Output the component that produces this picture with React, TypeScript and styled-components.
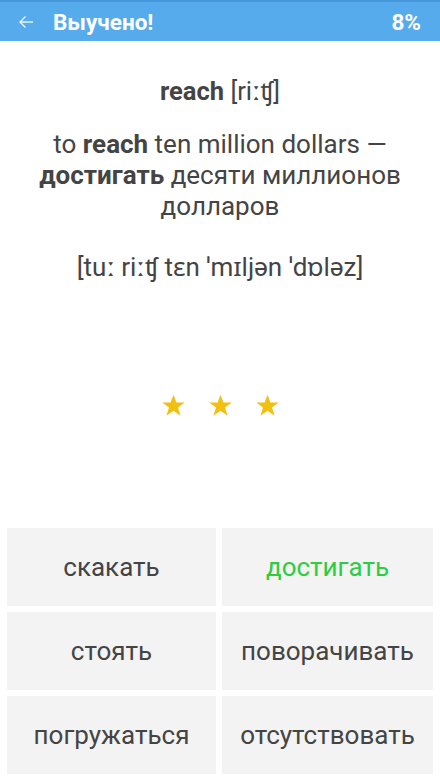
import React from 'react';
import styled, { createGlobalStyle } from 'styled-components';

const GlobalStyle = createGlobalStyle`
	html, body {
		margin: 0;
		padding: 0;
		background: #ffffff;
	}
	body {
		font-family: Roboto, "Noto Sans", "DejaVu Sans", sans-serif;
		-webkit-font-smoothing: antialiased;
	}
`;

const Screen = styled.div`
	display: flex;
	flex-direction: column;
	width: 440px;
	height: 782px;
	background: #ffffff;
	overflow: hidden;
`;

const Toolbar = styled.header`
	display: flex;
	align-items: center;
	height: 39px;
	border-top: 2px solid #4596da;
	background: #56abed;
	color: #ffffff;
	padding: 0 19px 0 18px;
`;

const BackButton = styled.button`
	display: flex;
	align-items: center;
	padding: 0;
	margin: 0 19px 0 0;
	border: none;
	background: none;
	color: rgba(255, 255, 255, 0.85);
	cursor: pointer;
`;

const Title = styled.h1`
	flex: 1;
	margin: 0;
	font-size: 22.5px;
	font-weight: 700;
`;

const Progress = styled.span`
	font-size: 22.5px;
	font-weight: 700;
`;

const Card = styled.section`
	display: flex;
	flex-direction: column;
	align-items: center;
	flex: 1;
	padding: 0 24px;
	color: #444444;
	text-align: center;
`;

const Word = styled.div`
	margin-top: 35px;
	font-size: 25.5px;
	line-height: 30px;
`;

const Example = styled.p`
	margin: 23px 0 0;
	font-size: 26px;
	line-height: 31px;
`;

const Transcription = styled.div`
	margin-top: 30px;
	font-size: 26px;
	line-height: 31px;
`;

const Stars = styled.div`
	display: flex;
	flex: 1;
	align-items: center;
	justify-content: center;
	gap: 22px;
`;

const Answers = styled.div`
	display: grid;
	grid-template-columns: 209px 211px;
	grid-auto-rows: 78px;
	gap: 6px;
	padding: 0 7px 8px;
`;

const Answer = styled.button<{ $correct?: boolean }>`
	display: flex;
	align-items: center;
	justify-content: center;
	padding: 0;
	border: none;
	background: #f3f3f3;
	color: ${({ $correct }) => ($correct ? '#2ecc40' : '#444444')};
	font-family: Roboto, "Noto Sans", sans-serif;
	font-size: 26px;
	cursor: pointer;
`;

const Star = () => (
	<svg width="25" height="24" viewBox="0 0 24 23">
		<path
			fill="#f2c010"
			d="M12 0.6l2.8 7.6h8l-6.5 4.8 2.5 7.8L12 16l-6.8 4.8 2.5-7.8L1.2 8.2h8z"
		/>
	</svg>
);

const answers = [
	{ text: 'скакать' },
	{ text: 'достигать', correct: true },
	{ text: 'стоять' },
	{ text: 'поворачивать' },
	{ text: 'погружаться' },
	{ text: 'отсутствовать' },
];

export default function App() {
	return (
		<>
			<GlobalStyle />
			<Screen>
				<Toolbar>
					<BackButton aria-label="Назад">
						<svg width="16" height="14" viewBox="0 0 16 14">
							<path
								d="M15 7H2M7.5 1.5L2 7l5.5 5.5"
								fill="none"
								stroke="currentColor"
								strokeWidth="1.4"
							/>
						</svg>
					</BackButton>
					<Title>Выучено!</Title>
					<Progress>8%</Progress>
				</Toolbar>
				<Card>
					<Word>
						<b>reach</b> [riːʧ]
					</Word>
					<Example>
						to <b>reach</b> ten million dollars — <b>достигать</b> десяти миллионов
						долларов
					</Example>
					<Transcription>[tuː riːʧ tɛn ˈmɪljən ˈdɒləz]</Transcription>
					<Stars>
						<Star />
						<Star />
						<Star />
					</Stars>
				</Card>
				<Answers>
					{answers.map(a => (
						<Answer key={a.text} $correct={a.correct}>
							{a.text}
						</Answer>
					))}
				</Answers>
			</Screen>
		</>
	);
}
